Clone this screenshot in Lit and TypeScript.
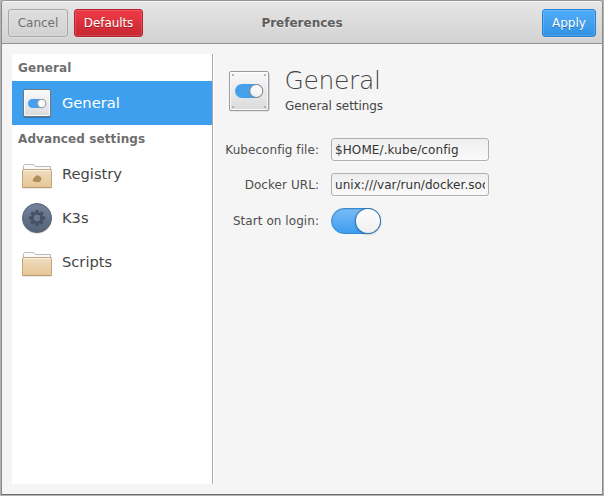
import { LitElement, html, css, svg } from "lit";
import { customElement } from "lit/decorators.js";

const folder = (emblem = false) => svg`
  <svg width="32" height="32" viewBox="0 0 32 32">
    <defs>
      <linearGradient id="f" x1="0" y1="0" x2="0" y2="1">
        <stop offset="0" stop-color="#f0dec2" /><stop offset="1" stop-color="#e7c694" />
      </linearGradient>
    </defs>
    <path d="M2.500 13V7.500L3.500 6.500H12.500L14.500 8.500H29.500V13" fill="#fafafa" stroke="#b9b9b9" />
    <path d="M1 30.500H31" stroke="#000" stroke-opacity=".08" />
    <rect x="1.500" y="11.500" width="29" height="18" rx=".8" fill="url(#f)" stroke="#c2a57c" />
    <path d="M2.500 12.500H29.500" stroke="#fbf1e0" />
    <path d="M1.500 29.500H30.500" stroke="#b89c72" />
    ${emblem ? svg`<path d="M13.500 24A1.900 1.900 0 0 1 13 20.300A2.300 2.300 0 0 1 14.600 18.300A2.700 2.700 0 0 1 18.900 18.600A2.700 2.700 0 0 1 19.700 22.500Q19.500 24 18.500 24Z" fill="#b08d5b" />` : ""}
  </svg>`;

const gear = () => {
  const teeth = [0, 45, 90, 135, 180, 225, 270, 315];
  return svg`
  <svg width="32" height="32" viewBox="0 0 32 32">
    <defs>
      <linearGradient id="k" x1="0" y1="0" x2="0" y2="1">
        <stop offset="0" stop-color="#75839d" /><stop offset="1" stop-color="#546277" />
      </linearGradient>
    </defs>
    <circle cx="16" cy="16.800" r="15" fill="#000" opacity=".15" />
    <circle cx="16" cy="16" r="14.500" fill="url(#k)" stroke="#566276" />
    <g fill="#455164">
      ${teeth.map((a) => svg`<path d="M14.600 7.900H17.400L18.100 12H13.900Z" transform="rotate(${a} 16 16)" />`)}
    </g>
    <circle cx="16" cy="16" r="4.600" fill="none" stroke="#455164" stroke-width="2.800" />
    <circle cx="16" cy="16" r="3.200" fill="#69778e" />
  </svg>`;
};

const smallSwitch = () => svg`
  <svg width="32" height="32" viewBox="0 0 32 32">
    <defs>
      <linearGradient id="s" x1="0" y1="0" x2="0" y2="1">
        <stop offset="0" stop-color="#fbfbfb" /><stop offset="1" stop-color="#dadada" />
      </linearGradient>
    </defs>
    <rect x="2" y="3" width="28" height="28" rx="2" fill="#123" opacity=".3" />
    <rect x="2.500" y="2.500" width="27" height="27" rx="1.500" fill="url(#s)" stroke="#70767d" />
    <rect x="3.500" y="3.500" width="25" height="25" rx=".8" fill="none" stroke="#fff" stroke-opacity=".8" />
    <rect x="7" y="12" width="18" height="9" rx="4.500" fill="#4a9df0" />
    <circle cx="20.700" cy="16.500" r="4.200" fill="#fafafa" stroke="#929599" />
  </svg>`;

const largeSwitch = () => svg`
  <svg width="48" height="48" viewBox="0 0 48 48">
    <defs>
      <linearGradient id="l" x1="0" y1="0" x2="0" y2="1">
        <stop offset="0" stop-color="#fafafa" /><stop offset="1" stop-color="#dadada" />
      </linearGradient>
      <linearGradient id="n" x1="0" y1="0" x2="0" y2="1">
        <stop offset="0" stop-color="#fff" /><stop offset="1" stop-color="#ededed" />
      </linearGradient>
    </defs>
    <rect x="4" y="6" width="41" height="38.600" rx="2" fill="#000" opacity=".12" />
    <rect x="4.500" y="4.500" width="39" height="39" rx="1.500" fill="url(#l)" stroke="#9a9a9f" />
    <rect x="5.500" y="5.500" width="37" height="37" rx=".8" fill="none" stroke="#fff" stroke-opacity=".8" />
    <g fill="#b0b0b3">
      <rect x="7" y="7" width="2" height="2" rx=".6" /><rect x="39" y="7" width="2" height="2" rx=".6" />
      <rect x="7" y="39" width="2" height="2" rx=".6" /><rect x="39" y="39" width="2" height="2" rx=".6" />
    </g>
    <rect x="10" y="17" width="28" height="14" rx="7" fill="#45a0e8" />
    <circle cx="31.300" cy="24" r="6.500" fill="url(#n)" stroke="#7d858d" />
  </svg>`;

@customElement("app-root")
export class AppRoot extends LitElement {
  static styles = css`
    :host {
      display: block;
      width: 604px;
      height: 496px;
      box-sizing: border-box;
      background: #b4b4b4;
      padding: 0 1px 1px;
      font: 12px "DejaVu Sans", sans-serif;
      color: #4d4d4d;
      white-space: nowrap;
      overflow: hidden;
    }
    * { box-sizing: border-box; }
    svg { display: block; flex: none; }
    .window {
      display: flex;
      flex-direction: column;
      height: 495px;
      border: 1px solid #888;
      border-top-color: #949494;
      border-bottom-color: #6c6c6c;
      border-radius: 4px 4px 0 0;
      background: #f5f5f5;
      overflow: hidden;
    }
    .header {
      display: grid;
      grid-template-columns: 1fr auto 1fr;
      align-items: center;
      height: 43px;
      flex: none;
      padding: 1px 6px 0;
      background: linear-gradient(#e6e6e6, #d2d2d2);
      border-bottom: 1px solid #949494;
      box-shadow: inset 0 1px #f6f6f6;
    }
    .actions { display: flex; gap: 6px; }
    .end { justify-content: flex-end; }
    .title { font-weight: bold; color: #5f5f5f; text-shadow: 0 1px #ececec; }
    .button {
      height: 28px;
      width: 60px;
      padding: 0;
      border: 1px solid #a8a8a8;
      border-radius: 3px;
      background: linear-gradient(#dfdfdf, #d2d2d2);
      box-shadow: inset 0 0 0 1px rgba(255, 255, 255, 0.15), 0 1px rgba(255, 255, 255, 0.25);
      color: #707070;
      font: inherit;
      line-height: 26px;
    }
    .danger {
      width: 69px;
      letter-spacing: -0.1px;
      border-color: #b32430;
      background: linear-gradient(#ef3b46, #c72732);
      color: #fff;
      text-shadow: 0 1px rgba(0, 0, 0, 0.3);
    }
    .primary {
      width: 54px;
      border-color: #2681ce;
      background: linear-gradient(#51adfa, #3292e3);
      color: #fff;
      text-shadow: 0 1px rgba(0, 0, 0, 0.3);
    }
    .body { display: flex; flex: 1; padding: 10px; }
    .sidebar {
      width: 201px;
      height: 430px;
      background: #fff;
      border-right: 1px solid #a8a8a8;
      box-shadow: 1px 0 #fff;
    }
    .section {
      height: 27px;
      padding: 1px 0 0 6px;
      font-weight: bold;
      letter-spacing: 0.1px;
      line-height: 27px;
      color: #6e6e6e;
    }
    .item {
      display: flex;
      align-items: center;
      gap: 9px;
      height: 44px;
      padding-left: 9px;
      font-size: 14.670px;
      color: #454545;
    }
    .caption { padding-bottom: 2px; }
    .selected { background: #3e9fee; color: #fff; }
    .content { padding: 13px 0 0 12px; }
    .heading { display: flex; gap: 12px; height: 48px; }
    .name { font-size: 25px; font-weight: 200; line-height: 28px; letter-spacing: -0.35px; margin-left: -0.5px; color: #454545; }
    .description { line-height: 14px; margin-top: 4px; letter-spacing: -0.06px; color: #454545; }
    .form {
      display: grid;
      grid-template-columns: 95px 158px;
      column-gap: 12px;
      row-gap: 12px;
      margin: 23px 0 0 -1px;
      align-items: center;
    }
    .label { text-align: right; letter-spacing: 0.06px; }
    .entry {
      width: 158px;
      height: 23px;
      padding: 1px 3px 0;
      border: 1px solid #afafaf;
      border-radius: 3px;
      background: linear-gradient(#eee, #fafafa);
      box-shadow: 0 1px #fafafa;
      color: #333;
      letter-spacing: 0.1px;
      line-height: 20px;
    }
    .value { overflow: hidden; }
    .long { letter-spacing: 0.03px; }
    .toggle {
      display: flex;
      justify-content: flex-end;
      width: 50px;
      height: 26px;
      border: 1px solid #3689cf;
      border-radius: 13px;
      background: linear-gradient(#79bbf5, #3d9df0);
      box-shadow: inset 0 1px 1px rgba(0, 60, 120, 0.12);
    }
    .knob {
      width: 24px;
      height: 24px;
      border-radius: 50%;
      background: linear-gradient(#fff, #eee);
      box-shadow: 0 0 0 1px #2c75b4, 0 1px 3px rgba(0, 0, 0, 0.3);
    }
  `;

  render() {
    return html`
      <div class="window">
        <header class="header">
          <div class="actions">
            <button class="button">Cancel</button><button class="button danger">Defaults</button>
          </div>
          <div class="title">Preferences</div>
          <div class="actions end"><button class="button primary">Apply</button></div>
        </header>
        <main class="body">
          <nav class="sidebar">
            <div class="section">General</div>
            <div class="item selected">${smallSwitch()}<span class="caption">General</span></div>
            <div class="section">Advanced settings</div>
            <div class="item">${folder(true)}<span class="caption">Registry</span></div>
            <div class="item">${gear()}<span class="caption">K3s</span></div>
            <div class="item">${folder()}<span class="caption">Scripts</span></div>
          </nav>
          <section class="content">
            <div class="heading">
              ${largeSwitch()}
              <div>
                <div class="name">General</div>
                <div class="description">General settings</div>
              </div>
            </div>
            <div class="form">
              <div class="label">Kubeconfig file:</div>
              <div class="entry"><div class="value">$HOME/.kube/config</div></div>
              <div class="label">Docker URL:</div>
              <div class="entry"><div class="value long">unix:///var/run/docker.sock</div></div>
              <div class="label">Start on login:</div>
              <div class="toggle"><div class="knob"></div></div>
            </div>
          </section>
        </main>
      </div>
    `;
  }
}
